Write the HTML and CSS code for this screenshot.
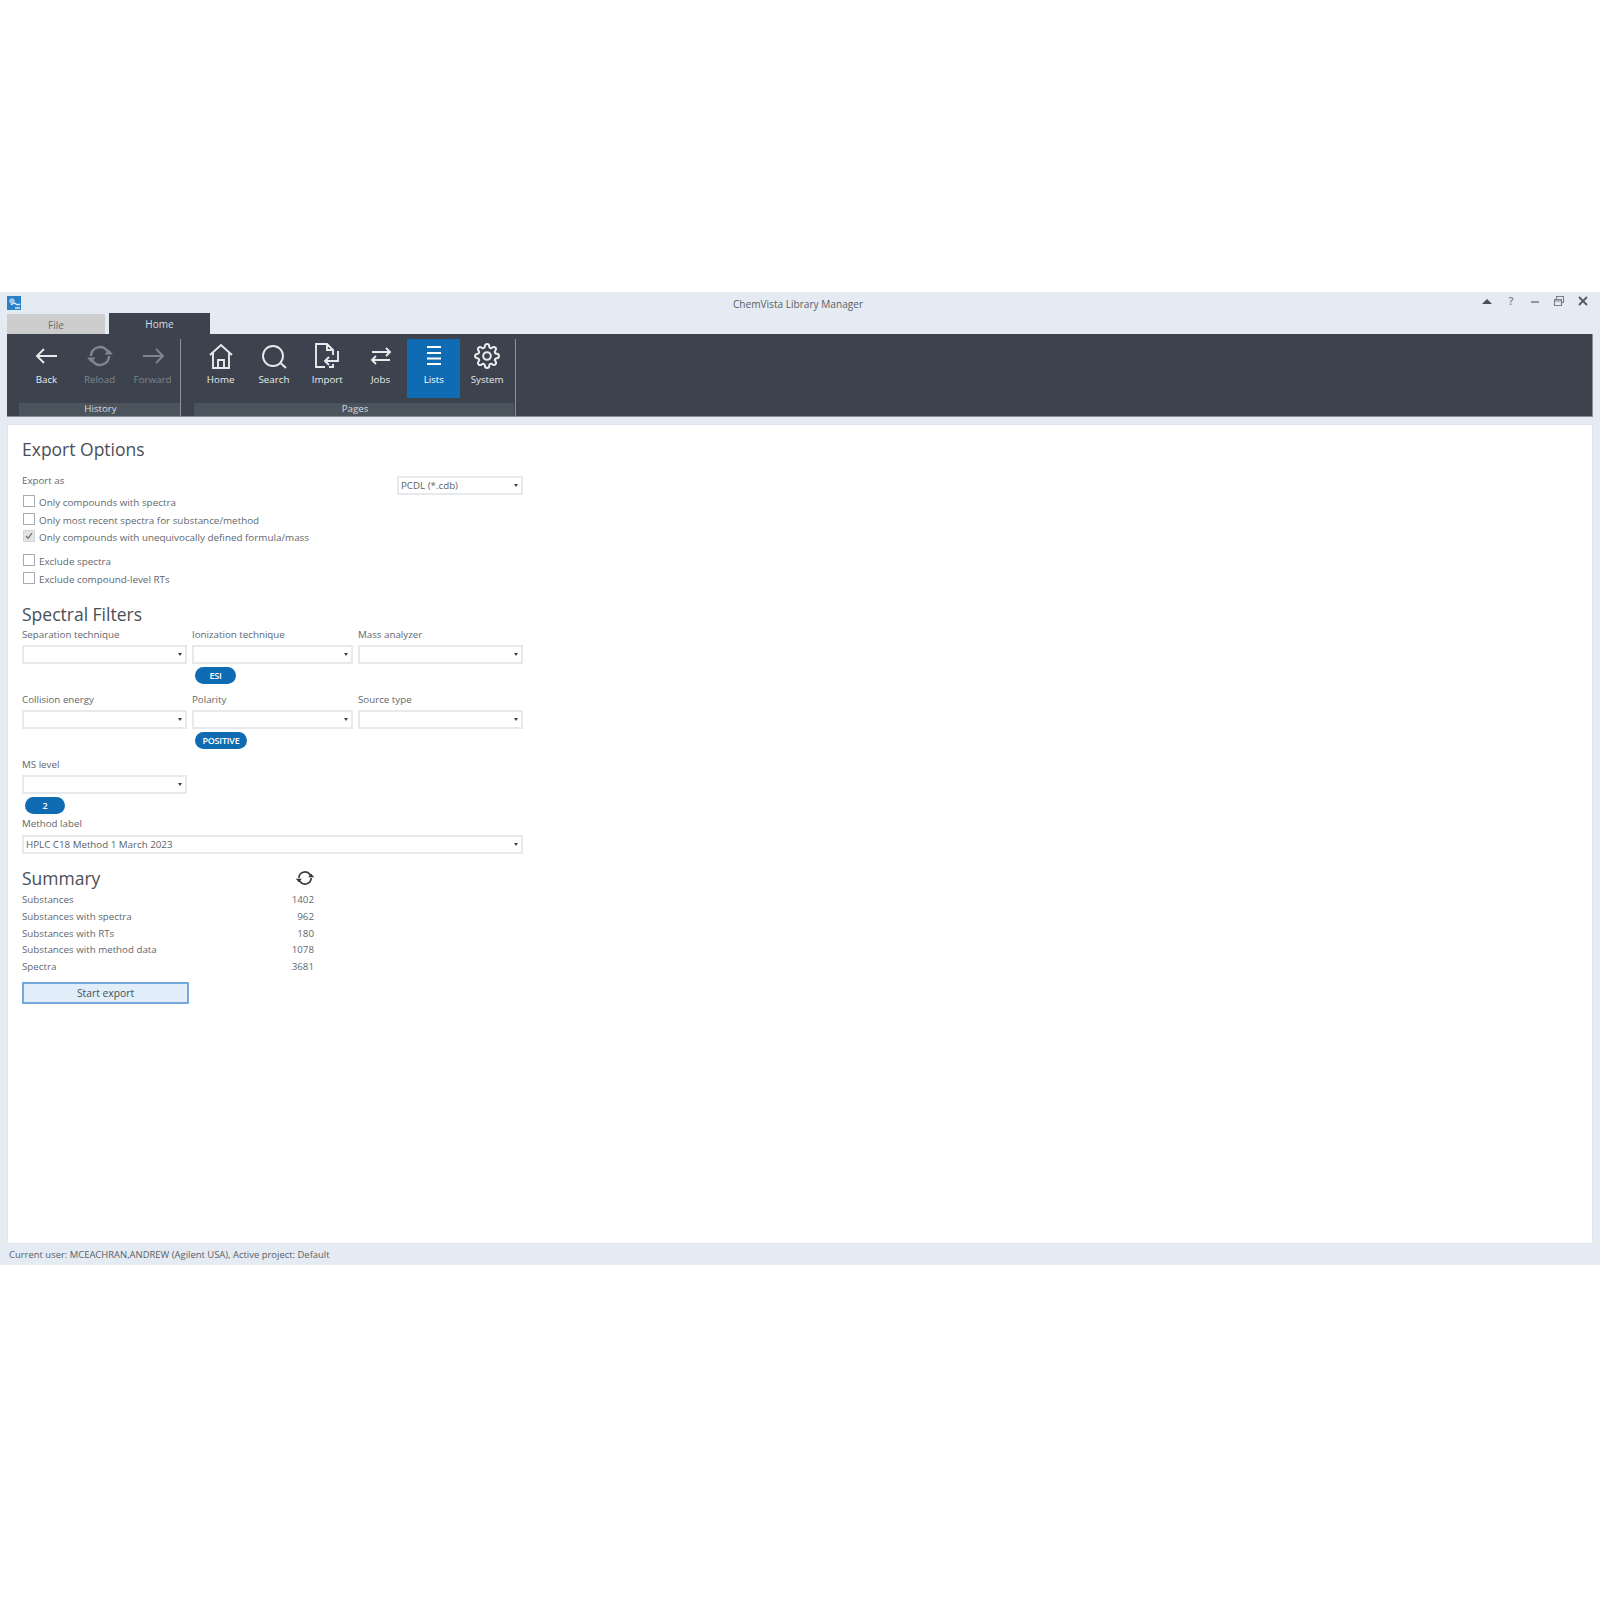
FILE: index.html
```html
<!DOCTYPE html>
<html lang="en">
<head>
<meta charset="utf-8">
<title>ChemVista Library Manager</title>
<link rel="stylesheet" href="styles.css">
</head>
<body>
<main class="window">
  <header class="titlebar">
    <svg class="logo" viewBox="0 0 14 14"><rect width="14" height="14" fill="#2a7fc9"/><circle cx="5" cy="5" r="2.800" fill="#9cc6ea"/><path d="M4 9c2-2 4-2 5-1s2 1 4 0M8 12h5" fill="none" stroke="#d5e7f6" stroke-width="1.500"/></svg>
    <div class="title">ChemVista Library Manager</div>
    <div class="controls">
      <svg class="ctl" viewBox="0 0 12 12"><path d="M1 9 6 4l5 5z" fill="#4a4f57"/></svg>
      <span class="ctl help">?</span>
      <svg class="ctl" viewBox="0 0 12 12"><path d="M2 7h8" stroke="#6b7076" stroke-width="1.4"/></svg>
      <svg class="ctl" viewBox="0 0 12 12"><path d="M1.5 4.5h7v6h-7zM3.5 4.5v-3h7v6h-2M1.5 6h7" fill="none" stroke="#7b8087" stroke-width="1.1"/></svg>
      <svg class="ctl" viewBox="0 0 12 12"><path d="M2 2l8 8M10 2l-8 8" stroke="#555a61" stroke-width="1.8"/></svg>
    </div>
  </header>

  <nav class="tabs">
    <div class="tab tab-file">File</div>
    <div class="tab tab-home">Home</div>
  </nav>

  <section class="ribbon">
    <div class="group group-history">
      <div class="items">
        <div class="item">
          <svg class="icon" viewBox="0 0 26 26"><path d="M23 13H3M10 6l-7 7 7 7"/></svg>
          <span>Back</span>
        </div>
        <div class="item off">
          <svg class="icon" viewBox="0 0 26 26"><path class="thick" d="M4 13a9 9 0 0 1 16-5.500L21.500 10M22 13a9 9 0 0 1-16 5.500L4.500 16"/><path class="solid" d="M17.500 11.500h8.500l-4.200-5zM0 14.500h8.500l-4.300 5z"/></svg>
          <span>Reload</span>
        </div>
        <div class="item off">
          <svg class="icon" viewBox="0 0 26 26"><path d="M3 13h20M16 6l7 7-7 7"/></svg>
          <span>Forward</span>
        </div>
      </div>
      <div class="bar">History</div>
    </div>
    <div class="sep"></div>
    <div class="group group-pages">
      <div class="items">
        <div class="item">
          <svg class="icon" viewBox="0 0 26 26"><path d="M2 12 13 2l11 10M5 10v15h16V10M10 25v-8h6v8"/></svg>
          <span>Home</span>
        </div>
        <div class="item">
          <svg class="icon" viewBox="0 0 26 26"><circle cx="12" cy="13" r="10"/><path d="m19.500 20 5.500 5"/></svg>
          <span>Search</span>
        </div>
        <div class="item">
          <svg class="icon" viewBox="0 0 26 26"><path d="M11 24H2V1h11l6 6v5M13 1v6h6M24 8v10H11M15 14l-4 4 4 4M19 21v3h-4"/></svg>
          <span>Import</span>
        </div>
        <div class="item">
          <svg class="icon" viewBox="0 0 26 26"><path d="M4 9h18M18 5l4 4-4 4M22 17H4M8 13l-4 4 4 4"/></svg>
          <span>Jobs</span>
        </div>
        <div class="item active">
          <svg class="icon" viewBox="0 0 26 26"><path d="M6 4h14M6 10h14M6 15.500h14M6 21h14"/></svg>
          <span>Lists</span>
        </div>
        <div class="item">
          <svg class="icon" viewBox="0 0 24 24"><circle cx="12" cy="12" r="3.500"/><path d="M19.400 15a1.650 1.650 0 0 0 .33 1.820l.06.06a2 2 0 0 1 0 2.830 2 2 0 0 1-2.830 0l-.06-.06a1.650 1.650 0 0 0-1.820-.33 1.650 1.650 0 0 0-1 1.510V21a2 2 0 0 1-2 2 2 2 0 0 1-2-2v-.09A1.650 1.650 0 0 0 9 19.400a1.650 1.650 0 0 0-1.820.33l-.06.06a2 2 0 0 1-2.830 0 2 2 0 0 1 0-2.830l.06-.06a1.650 1.650 0 0 0 .33-1.820 1.650 1.650 0 0 0-1.510-1H3a2 2 0 0 1-2-2 2 2 0 0 1 2-2h.09A1.650 1.650 0 0 0 4.600 9a1.650 1.650 0 0 0-.33-1.820l-.06-.06a2 2 0 0 1 0-2.830 2 2 0 0 1 2.830 0l.06.06a1.650 1.650 0 0 0 1.820.33H9a1.650 1.650 0 0 0 1-1.510V3a2 2 0 0 1 2-2 2 2 0 0 1 2 2v.09a1.650 1.650 0 0 0 1 1.510 1.650 1.650 0 0 0 1.820-.33l.06-.06a2 2 0 0 1 2.830 0 2 2 0 0 1 0 2.830l-.06.06a1.650 1.650 0 0 0-.33 1.820V9a1.650 1.650 0 0 0 1.510 1H21a2 2 0 0 1 2 2 2 2 0 0 1-2 2h-.09a1.650 1.650 0 0 0-1.510 1z"/></svg>
          <span>System</span>
        </div>
      </div>
      <div class="bar">Pages</div>
    </div>
    <div class="sep"></div>
  </section>

  <section class="panel">
    <div class="form">
      <h2 class="heading first">Export Options</h2>
      <div class="export-row">
        <span class="label">Export as</span>
        <div class="select select-format">PCDL (*.cdb)</div>
      </div>
      <div class="checks">
        <div class="check"><span class="box"></span><span class="check-text">Only compounds with spectra</span></div>
        <div class="check"><span class="box"></span><span class="check-text">Only most recent spectra for substance/method</span></div>
        <div class="check"><span class="box checked"><svg viewBox="0 0 12 12"><path d="m2.500 6 2.500 3 4.500-6.500" fill="none" stroke="#777" stroke-width="1.600"/></svg></span><span class="check-text">Only compounds with unequivocally defined formula/mass</span></div>
      </div>
      <div class="checks checks-second">
        <div class="check"><span class="box"></span><span class="check-text">Exclude spectra</span></div>
        <div class="check"><span class="box"></span><span class="check-text">Exclude compound-level RTs</span></div>
      </div>

      <h2 class="heading filters-heading">Spectral Filters</h2>
      <div class="filters">
        <div class="field"><span class="label">Separation technique</span><div class="select"></div></div>
        <div class="field"><span class="label">Ionization technique</span><div class="select"></div><span class="chip chip-esi">ESI</span></div>
        <div class="field"><span class="label">Mass analyzer</span><div class="select"></div></div>
        <div class="field"><span class="label">Collision energy</span><div class="select"></div></div>
        <div class="field"><span class="label">Polarity</span><div class="select"></div><span class="chip chip-positive">POSITIVE</span></div>
        <div class="field"><span class="label">Source type</span><div class="select"></div></div>
        <div class="field"><span class="label">MS level</span><div class="select"></div><span class="chip chip-level">2</span></div>
      </div>
      <div class="field method">
        <span class="label">Method label</span>
        <div class="select select-method">HPLC C18 Method 1 March 2023</div>
      </div>

      <div class="summary">
        <div class="summary-head">
          <h2 class="heading">Summary</h2>
          <svg class="refresh" viewBox="0 0 26 26"><path d="M5 13a8 8 0 0 1 14.500-4.500L21 11M21 13a8 8 0 0 1-14.500 4.500L5 15"/><path class="solid" d="M17 12h8l-4-4.500zM1 14h8l-4 4.500z"/></svg>
        </div>
        <div class="stat"><span>Substances</span><span>1402</span></div>
        <div class="stat"><span>Substances with spectra</span><span>962</span></div>
        <div class="stat"><span>Substances with RTs</span><span>180</span></div>
        <div class="stat"><span>Substances with method data</span><span>1078</span></div>
        <div class="stat"><span>Spectra</span><span>3681</span></div>
      </div>
      <button class="start" type="button">Start export</button>
    </div>
  </section>

  <footer class="status">Current user: MCEACHRAN,ANDREW (Agilent USA), Active project: Default</footer>
</main>
</body>
</html>
```

FILE: styles.css
```css
* { box-sizing: border-box; }

html, body { margin: 0; background: #fff; }

body {
  height: 1600px;
  padding-top: 292px;
  font-family: "Open Sans", "Noto Sans", sans-serif;
  font-size: 9.750px;
  color: #62676e;
}

.window {
  height: 973px;
  display: flex;
  flex-direction: column;
  background: #e4ebf3;
}

.titlebar {
  height: 21px;
  flex: none;
  display: grid;
  grid-template-columns: 1fr auto 1fr;
  align-items: center;
  padding: 0 11px 0 7px;
}

.logo { width: 14px; height: 14px; margin-top: 1px; }

.title {
  grid-column: 2;
  font-size: 10.100px;
  color: #5a5f66;
  padding-top: 3px;
}

.controls {
  grid-column: 3;
  justify-self: end;
  display: flex;
  gap: 12px;
  align-items: center;
  margin-bottom: 4px;
}

.ctl { width: 12px; height: 12px; display: block; }

.help {
  font-size: 11px;
  line-height: 12px;
  text-align: center;
  font-weight: 600;
  color: #7b8087;
}

.tabs {
  height: 21px;
  flex: none;
  display: flex;
  padding-left: 7px;
  gap: 4px;
}

.tab { text-align: center; font-size: 10px; line-height: 23px; }

.tab-file { width: 98px; height: 20px; margin-top: 1px; background: #cdcdcd; color: #6a6a6a; line-height: 22px; }

.tab-home { width: 101px; background: #3c434e; color: #d8dbdf; }

.ribbon {
  height: 83px;
  flex: none;
  margin: 0 7px;
  padding: 5px 0 0 12px;
  display: flex;
  background: #3c434e;
  border-bottom: 1px solid #8b9199;
  border-right: 1px solid #8b9199;
}

.group { display: flex; flex-direction: column; }

.group-history { width: 161px; }

.group-pages { width: 320px; margin-left: 13px; }

.items { display: flex; height: 59px; }

.group-history .items { padding-left: 1px; }

.item {
  width: 53px;
  padding-top: 4px;
  display: flex;
  flex-direction: column;
  align-items: center;
  color: #e8eaec;
}

.group-pages .item { width: 53.300px; }

.item span { line-height: 14px; margin-top: 4px; font-size: 9.750px; }

.item.off { color: #7f858d; }

.item.active { background: #0f6cb2; color: #fff; }

.icon {
  width: 26px;
  height: 26px;
  fill: none;
  stroke: currentColor;
  stroke-width: 1.900;
}

.thick { stroke-width: 2.400; }

.solid { fill: currentColor; stroke: none; }

.bar {
  height: 13px;
  margin-top: 5px;
  padding-left: 2px;
  background: #4b535d;
  color: #d8dbdf;
  text-align: center;
  font-size: 9.750px;
  line-height: 12px;
}

.sep { width: 1px; height: 78px; background: #8b9199; }

.group-pages + .sep { margin-left: 1px; }

.panel {
  flex: 1;
  margin: 8px 8px 0;
  background: #fff;
  padding: 12px 0 0 14px;
  box-shadow: 0 0 1px #bcc4cd;
}

.form { width: 501px; }

.heading {
  margin: 0;
  font-size: 17.500px;
  line-height: 24px;
  font-weight: 400;
  color: #4a4f57;
}

.export-row {
  display: flex;
  justify-content: space-between;
  height: 20px;
  margin-top: 13px;
}

.label { display: block; line-height: 14px; }

.select {
  position: relative;
  height: 19px;
  margin-top: 3px;
  padding-left: 2px;
  border: 2px solid #e7e9ec;
  background: #fff;
  line-height: 15px;
  color: #5c6168;
}

.select::after {
  content: "";
  position: absolute;
  right: 3px;
  top: 6px;
  border-left: 2.500px solid transparent;
  border-right: 2.500px solid transparent;
  border-top: 3.500px solid #3c434e;
}

.select-format { width: 126px; margin-top: 2px; }

.select-method { margin-top: 4px; }

.checks {
  display: flex;
  flex-direction: column;
  gap: 3.500px;
}

.checks-second { margin-top: 10px; }

.check { height: 14px; display: flex; gap: 4px; padding-left: 1px; align-items: flex-start; }

.box {
  width: 12px;
  height: 12px;
  margin-top: 1px;
  flex: none;
  border: 1px solid #a9adb2;
  background: #fff;
}

.box.checked { background: #e3e4e6; border-color: #d2d4d7; }

.box svg { display: block; width: 10px; height: 10px; }

.check-text { font-size: 9.850px; line-height: 14px; padding-top: 1px; white-space: nowrap; }

.filters-heading { margin-top: 17.500px; }

.filters {
  display: grid;
  grid-template-columns: 165px 161px 165px;
  column-gap: 5px;
  row-gap: 9px;
  margin-top: 2px;
}

.field { display: flex; flex-direction: column; align-items: stretch; }

.chip {
  align-self: flex-start;
  height: 17px;
  margin: 3px 0 0 3px;
  border-radius: 9px;
  background: #0f6cb2;
  color: #fff;
  text-align: center;
  font-size: 9px;
  font-weight: 600;
  letter-spacing: -0.200px;
  line-height: 17px;
}

.chip-esi { width: 41px; }

.chip-positive { width: 52px; }

.chip-level { width: 40px; }

.method { margin-top: 3px; }

.summary { width: 292px; margin-top: 12px; }

.summary-head {
  display: flex;
  justify-content: space-between;
  align-items: center;
  height: 24px;
  margin-bottom: 2px;
}

.refresh {
  width: 20px;
  height: 20px;
  margin-right: -1px;
  fill: none;
  stroke: #33373d;
  stroke-width: 2.200;
}

.refresh .solid { fill: #33373d; }

.stat {
  display: flex;
  justify-content: space-between;
  height: 16.750px;
  line-height: 16.750px;
}

.start {
  display: block;
  width: 167px;
  height: 22px;
  margin-top: 6px;
  padding: 0;
  background: #e1eefa;
  border: 2px solid #73aadb;
  font: 10.300px "Open Sans", "Noto Sans", sans-serif;
  color: #4a4f57;
}

.status {
  height: 22px;
  flex: none;
  padding-left: 9px;
  line-height: 23px;
  font-size: 9.450px;
  color: #5a5f66;
}
```
